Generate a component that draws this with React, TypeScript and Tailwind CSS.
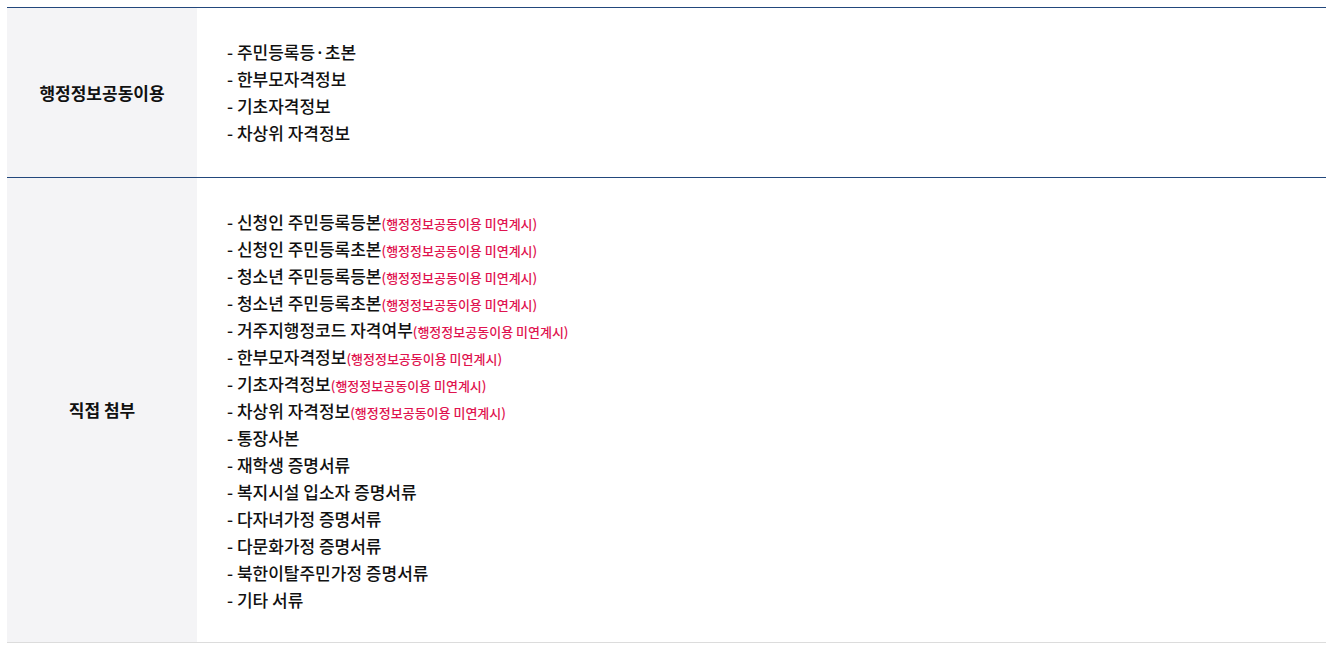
const NOTE = '(행정정보공동이용 미연계시)'

const shared = ['주민등록등·초본', '한부모자격정보', '기초자격정보', '차상위 자격정보']

const attach: { text: string; note?: boolean }[] = [
  { text: '신청인 주민등록등본', note: true },
  { text: '신청인 주민등록초본', note: true },
  { text: '청소년 주민등록등본', note: true },
  { text: '청소년 주민등록초본', note: true },
  { text: '거주지행정코드 자격여부', note: true },
  { text: '한부모자격정보', note: true },
  { text: '기초자격정보', note: true },
  { text: '차상위 자격정보', note: true },
  { text: '통장사본' },
  { text: '재학생 증명서류' },
  { text: '복지시설 입소자 증명서류' },
  { text: '다자녀가정 증명서류' },
  { text: '다문화가정 증명서류' },
  { text: '북한이탈주민가정 증명서류' },
  { text: '기타 서류' },
]

function Row({
  title,
  children,
  last,
  pad,
}: {
  title: string
  children: React.ReactNode
  last?: boolean
  pad: string
}) {
  return (
    <div className={`flex border-b ${last ? 'border-[#dcdcdc]' : 'border-[#22477c]'}`}>
      <div className="flex w-[190px] shrink-0 items-center justify-center bg-[#f4f4f6] text-[17px] font-bold text-[#111]">
        {title}
      </div>
      <ul className={`flex-1 px-[30px] text-[17px] font-medium leading-[27px] text-[#111] ${pad}`}>{children}</ul>
    </div>
  )
}

export default function App() {
  return (
    <div
      className="min-h-screen bg-white px-[7px] pt-[7px]"
      style={{ fontFamily: '"Noto Sans CJK KR", "Noto Sans", sans-serif' }}
    >
      <div className="w-[1319px] border-t border-[#22477c]">
        <Row title="행정정보공동이용" pad="pt-[30px] pb-[31px]">
          {shared.map((s) => (
            <li key={s} className="h-[27px]">
              - {s}
            </li>
          ))}
        </Row>
        <Row title="직접 첨부" pad="pt-[30px] pb-[29px]" last>
          {attach.map((a) => (
            <li key={a.text} className="h-[27px] whitespace-nowrap">
              - {a.text}
              {a.note ? <span className="text-[13px] font-medium text-[#e0134f]">{NOTE}</span> : null}
            </li>
          ))}
        </Row>
      </div>
    </div>
  )
}
